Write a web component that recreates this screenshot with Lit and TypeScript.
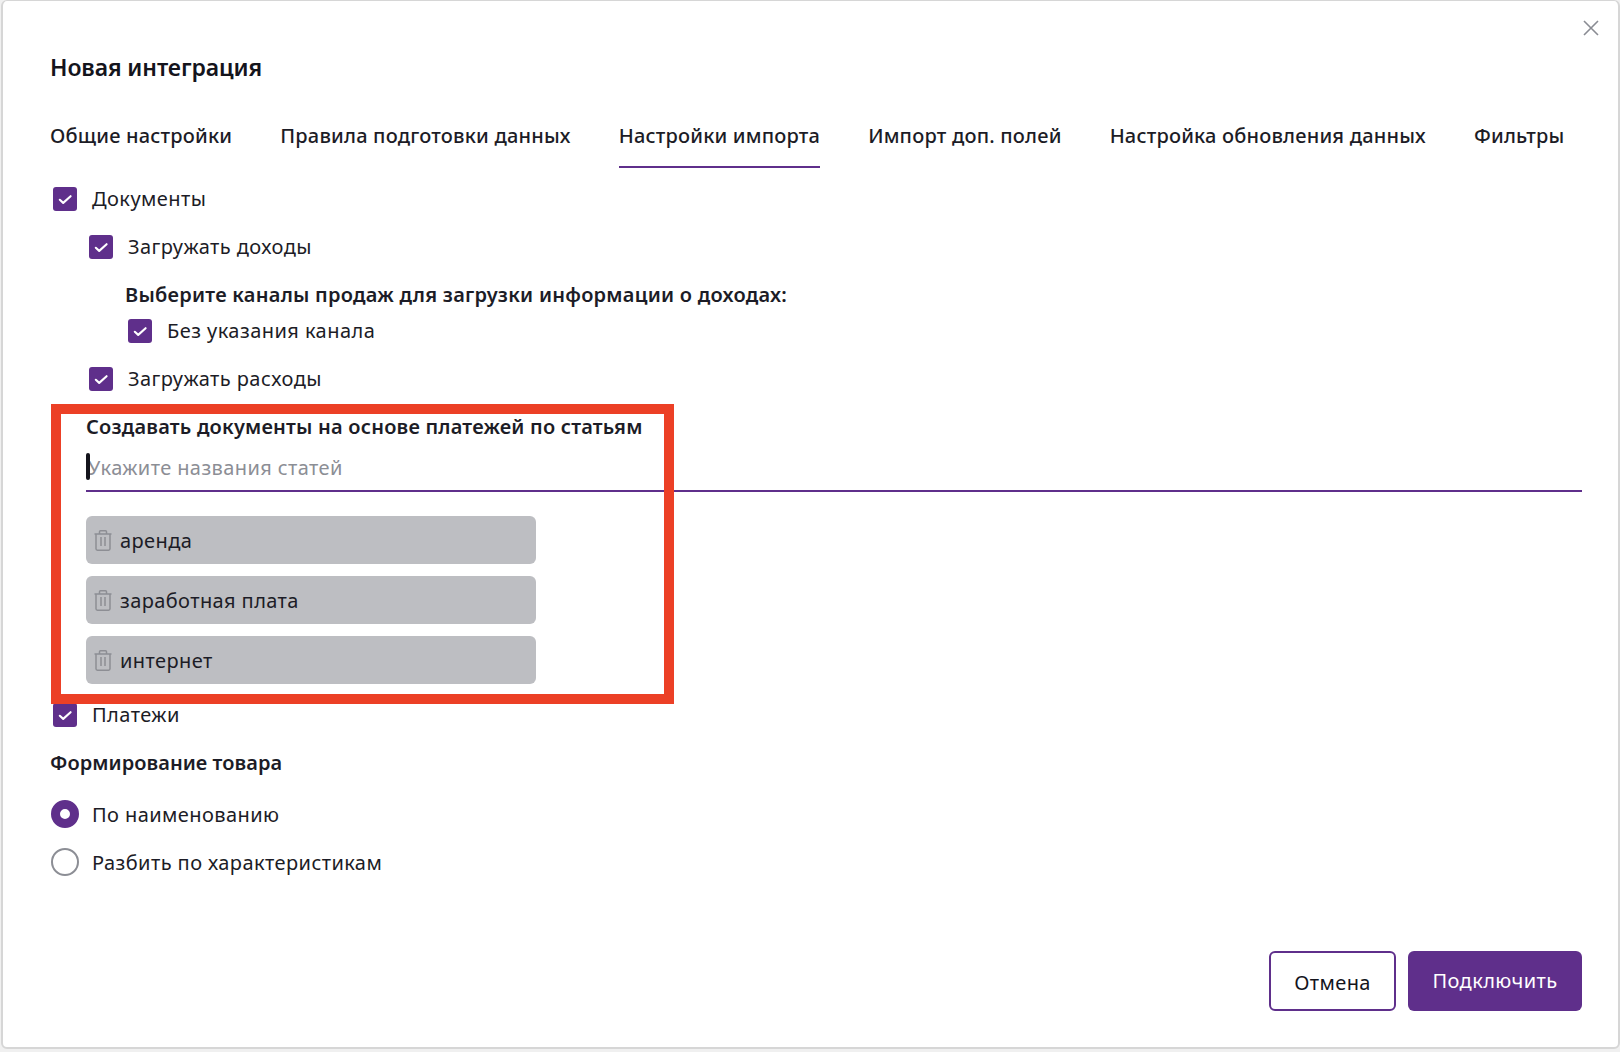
import { LitElement, html, css, svg } from "lit";
import { customElement } from "lit/decorators.js";

const check = html`<span class="box"><svg width="24" height="24" viewBox="0 0 24 24" fill="none"><path d="M6.8 12.8 10.2 15.9 17.6 9.2" stroke="#fff" stroke-width="2.1" stroke-linecap="round" stroke-linejoin="round"/></svg></span>`;
const trash = svg`<svg class="trash" width="18" height="21" viewBox="0 0 18 21" fill="none" stroke="#8d8e94" stroke-width="1.5"><path d="M.5 4h17"/><path d="M5.5 4V1.8c0-.6.4-1 1-1h5c.6 0 1 .4 1 1V4"/><path d="M2 4v14.8c0 .8.6 1.4 1.4 1.4h11.2c.8 0 1.4-.6 1.4-1.4V4"/><path d="M7 7v9M11 7v9"/></svg>`;

@customElement("app-root")
export class AppRoot extends LitElement {
  static styles = css`
    :host { display: block; width: 1620px; height: 1052px; background: #f0f0f0; font-family: "Noto Sans", "Liberation Sans", sans-serif; color: #1c1c26; font-size: 20px; line-height: 24px; letter-spacing: 0.45px; position: relative; overflow: hidden; }
    .modal { box-sizing: border-box; width: 1619px; height: 1049px; margin-left: 1px; background: #fff; border: 2px solid #d6d6d6; border-top-width: 1px; border-radius: 6px; padding: 0 36px 36px 47px; display: flex; flex-direction: column; position: relative; }
    .close { position: absolute; right: 19px; top: 19px; }
    h1 { margin: 50px 0 0; font-size: 23px; line-height: 32px; font-weight: 600; color: #14141c; letter-spacing: -0.1px; }
    .tabs { display: flex; gap: 48px; margin-top: 36px; }
    .tab { padding-top: 3px; padding-bottom: 16px; border-bottom: 2px solid transparent; font-weight: 500; line-height: 28px; white-space: nowrap; letter-spacing: 0.2px; }
    .tab.on { border-bottom-color: #5f2f8b; }
    .body { margin-top: 19px; display: flex; flex-direction: column; }
    .row { display: flex; align-items: center; height: 24px; margin-bottom: 24px; }
    .box { width: 24px; height: 24px; background: #5f2f8b; border-radius: 3px; display: flex; align-items: center; justify-content: center; margin-right: 15px; flex: none; }
    .l1 { margin-left: 3px; }
    .l2 { margin-left: 39px; }
    .l3 { margin-left: 78px; }
    .sub { margin-left: 75px; font-weight: 600; height: 24px; margin-bottom: 12px; letter-spacing: 0.25px; }
    .art { margin-left: 36px; font-weight: 600; height: 24px; letter-spacing: 0.2px; }
    .field { margin-left: 36px; margin-top: 14px; height: 37px; border-bottom: 2px solid #5f2f8b; color: #8c8e95; padding-left: 2px; line-height: 30px; position: relative; letter-spacing: 0.4px; }
    .caret { position: absolute; left: 0; top: 0; width: 4px; height: 27px; border-radius: 2px; background: #14141c; }
    .chips { margin: 24px 0 19px 36px; display: flex; flex-direction: column; gap: 12px; }
    .chip { width: 450px; height: 48px; box-sizing: border-box; background: #bdbec2; border-radius: 6px; display: flex; align-items: center; padding-left: 8px; gap: 8px; letter-spacing: 0.4px; }
    .chip span { padding-top: 1px; }
    .h2 { font-weight: 600; height: 24px; margin-bottom: 25px; letter-spacing: 0.05px; }
    .radio { display: flex; align-items: center; margin-left: 1px; height: 28px; margin-bottom: 20px; letter-spacing: 0.42px; }
    .radio span.t { padding-top: 1px; }
    .dot { width: 28px; height: 28px; box-sizing: border-box; border-radius: 50%; margin-right: 13px; flex: none; }
    .dot.on { border: 9px solid #5f2f8b; background: #fff; }
    .dot.off { border: 2px solid #8c8e95; background: #fff; }
    .foot { margin-top: auto; display: flex; justify-content: flex-end; gap: 12px; }
    .btn { height: 60px; box-sizing: border-box; border-radius: 6px; display: flex; align-items: center; justify-content: center; letter-spacing: 0.4px; }
    .cancel { width: 127px; border: 2px solid #5f2f8b; background: #fff; color: #14141c; }
    .cancel span { padding-top: 3px; }
    .ok { width: 174px; background: #5f2f8b; color: #fff; }
    .mark { position: absolute; left: 51px; top: 404px; width: 623px; height: 300px; box-sizing: border-box; border: 10px solid #ec4026; pointer-events: none; }
  `;

  render() {
    const tabs = ["Общие настройки", "Правила подготовки данных", "Настройки импорта", "Импорт доп. полей", "Настройка обновления данных", "Фильтры"];
    return html`
      <div class="modal">
        <svg class="close" width="16" height="16" viewBox="0 0 16 16" fill="none" stroke="#8a8c93" stroke-width="1.6"><path d="M1 1l14 14M15 1 1 15"/></svg>
        <h1>Новая интеграция</h1>
        <div class="tabs">${tabs.map((t, i) => html`<div class="tab ${i === 2 ? "on" : ""}">${t}</div>`)}</div>
        <div class="body">
          <div class="row l1">${check}Документы</div>
          <div class="row l2">${check}Загружать доходы</div>
          <div class="sub">Выберите каналы продаж для загрузки информации о доходах:</div>
          <div class="row l3">${check}Без указания канала</div>
          <div class="row l2">${check}Загружать расходы</div>
          <div class="art">Создавать документы на основе платежей по статьям</div>
          <div class="field"><span class="caret"></span>Укажите названия статей</div>
          <div class="chips">
            ${["аренда", "заработная плата", "интернет"].map((c) => html`<div class="chip">${trash}<span>${c}</span></div>`)}
          </div>
          <div class="row l1">${check}Платежи</div>
          <div class="h2">Формирование товара</div>
          <div class="radio"><span class="dot on"></span><span class="t">По наименованию</span></div>
          <div class="radio"><span class="dot off"></span><span class="t">Разбить по характеристикам</span></div>
        </div>
        <div class="foot">
          <div class="btn cancel"><span>Отмена</span></div>
          <div class="btn ok">Подключить</div>
        </div>
      </div>
      <div class="mark"></div>
    `;
  }
}
